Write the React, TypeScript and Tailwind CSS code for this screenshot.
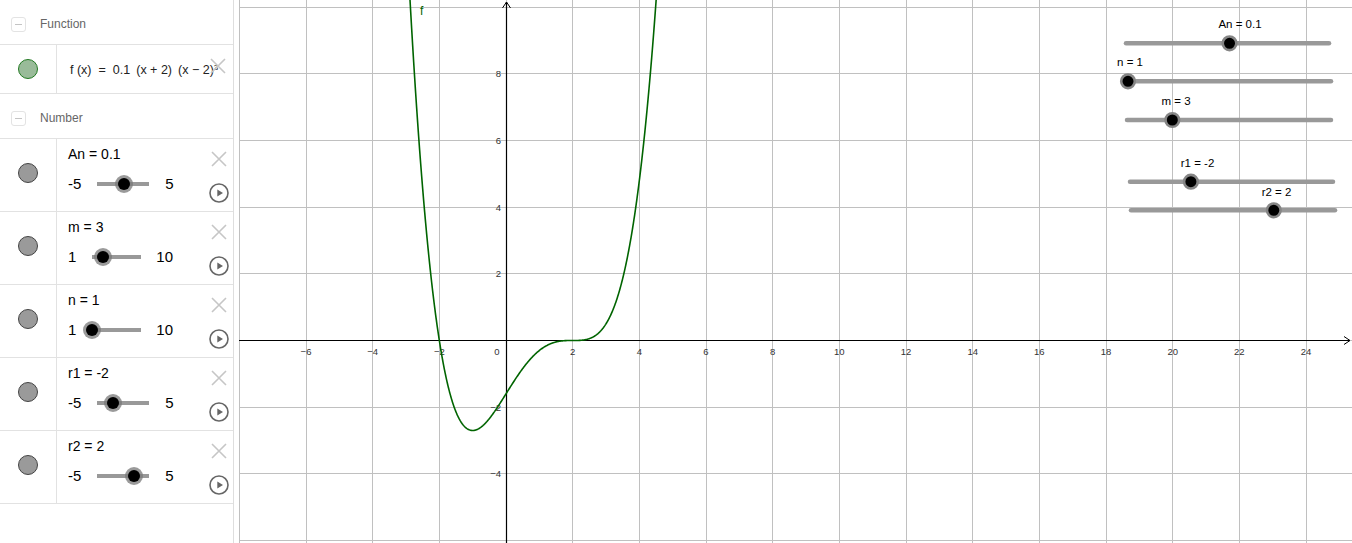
import React from "react";

type NumberItem = {
  name: string;
  value: number;
  min: number;
  max: number;
  track: number;
};

const numbers: NumberItem[] = [
  { name: "An", value: 0.1, min: -5, max: 5, track: 52 },
  { name: "m", value: 3, min: 1, max: 10, track: 49 },
  { name: "n", value: 1, min: 1, max: 10, track: 49 },
  { name: "r1", value: -2, min: -5, max: 5, track: 52 },
  { name: "r2", value: 2, min: -5, max: 5, track: 52 },
];

// sliders drawn on the graphics view (local svg coords)
const canvasSliders = [
  { label: "An = 0.1", x1: 887, x2: 1090, y: 43.3, frac: 0.51, lx: 1001, ly: 28 },
  { label: "n = 1", x1: 889, x2: 1092, y: 81.3, frac: 0, lx: 891, ly: 66 },
  { label: "m = 3", x1: 888, x2: 1092, y: 120, frac: 2 / 9, lx: 937, ly: 105 },
  { label: "r1 = -2", x1: 891, x2: 1094, y: 181.7, frac: 0.3, lx: 958.5, ly: 166.7 },
  { label: "r2 = 2", x1: 892, x2: 1096, y: 210.3, frac: 0.7, lx: 1037.5, ly: 195.7 },
];

const W = 1113;
const H = 543;
const OX = 267;
const OY = 340.5;
const S = 100 / 3;

const f = (x: number) => 0.1 * Math.pow(x + 2, 1) * Math.pow(x - 2, 3);

const fmt = (n: number) => (n < 0 ? `\u2212${Math.abs(n)}` : `${n}`);

const MinusButton = () => (
  <div className="ml-[11px] flex h-[15px] w-[15px] items-center justify-center rounded-[3px] border border-[#e3e3e3]">
    <div className="h-[1px] w-[7px] bg-[#c4c4c4]" />
  </div>
);

const CloseIcon = () => (
  <svg width="16" height="16" viewBox="0 0 16 16">
    <path d="M1 1 L15 15 M15 1 L1 15" stroke="#c6c6c6" strokeWidth="1.6" fill="none" />
  </svg>
);

const PlayIcon = () => (
  <svg width="20" height="20" viewBox="0 0 20 20">
    <circle cx="10" cy="10" r="9" stroke="#666" strokeWidth="1.6" fill="white" />
    <path d="M8.3 6.4 L8.3 13.6 L14 10 Z" fill="#666" />
  </svg>
);

const Knob = ({ size }: { size: number }) => (
  <div
    className="rounded-full bg-black"
    style={{ width: size, height: size, boxShadow: "0 0 0 3px rgba(120,120,120,0.75)" }}
  />
);

const NumberRow = ({ item }: { item: NumberItem }) => {
  const frac = (item.value - item.min) / (item.max - item.min);
  return (
    <div className="flex h-[73px] border-b border-[#e2e2e2]">
      <div className="flex w-[57px] shrink-0 justify-center border-r border-[#e2e2e2]">
        <div className="mt-[24px] h-[20px] w-[20px] rounded-full border border-[#444] bg-[#9a9a9a]" />
      </div>
      <div className="flex-1 pl-[11px] pt-[7px] text-black">
        <div className="text-[14px] leading-[16px]">
          {item.name} = {item.value}
        </div>
        <div className="mt-[12px] flex h-[20px] items-center gap-[16px] text-[15px] leading-[20px]">
          <span>{item.min}</span>
          <div className="relative h-[4px] bg-[#999]" style={{ width: item.track }}>
            <div
              className="absolute top-1/2 -translate-x-1/2 -translate-y-1/2"
              style={{ left: `${frac * 100}%` }}
            >
              <Knob size={12} />
            </div>
          </div>
          <span className={item.max === 10 ? "-ml-px" : ""}>{item.max}</span>
        </div>
      </div>
      <div className="flex w-[28px] shrink-0 flex-col items-center">
        <div className="mt-[12px]">
          <CloseIcon />
        </div>
        <div className="mt-[16px]">
          <PlayIcon />
        </div>
      </div>
    </div>
  );
};

const Graph = () => {
  const vLines: number[] = [];
  for (let k = -8; k <= 24; k += 2) vLines.push(Math.floor(OX + k * S) + 0.5);
  const hLines: number[] = [];
  for (let k = -6; k <= 10; k += 2) hLines.push(Math.floor(OY - k * S) + 0.5);

  const xLabels: number[] = [];
  for (let k = -6; k <= 24; k += 2) if (k !== 0) xLabels.push(k);
  const yLabels = [8, 6, 4, 2, -2, -4];

  const pts: string[] = [];
  for (let x = -3.1; x <= 4.75; x += 0.01) {
    const y = Math.max(-60, Math.min(H + 60, OY - f(x) * S));
    pts.push(`${(OX + x * S).toFixed(2)},${y.toFixed(2)}`);
  }

  return (
    <svg width={W} height={H} viewBox={`0 0 ${W} ${H}`} className="block shrink-0 bg-white">
      {vLines.map((x) => (
        <line key={`v${x}`} x1={x} y1={0} x2={x} y2={H} stroke="#c0c0c0" strokeWidth="1" />
      ))}
      {hLines.map((y) => (
        <line key={`h${y}`} x1={0} y1={y} x2={W} y2={y} stroke="#c0c0c0" strokeWidth="1" />
      ))}

      {/* axes */}
      <line x1={0} y1={OY} x2={W - 2} y2={OY} stroke="#000" strokeWidth="1.2" />
      <polyline points={`${W - 8},${OY - 4} ${W - 2},${OY} ${W - 8},${OY + 4}`} stroke="#000" fill="none" strokeWidth="1" />
      <line x1={OX + 0.5} y1={2} x2={OX + 0.5} y2={H} stroke="#000" strokeWidth="1.2" />
      <polyline points={`${OX - 3.5},${8} ${OX + 0.5},${2} ${OX + 4.5},${8}`} stroke="#000" fill="none" strokeWidth="1" />

      <g fontFamily="'Liberation Sans', Arial, sans-serif" fontSize="9.5" fill="#333">
        {xLabels.map((k) => (
          <text key={`xl${k}`} x={OX + k * S} y={OY + 14} textAnchor="middle">
            {fmt(k)}
          </text>
        ))}
        <text x={OX - 9} y={OY + 14} textAnchor="middle">
          0
        </text>
        {yLabels.map((k) => (
          <text key={`yl${k}`} x={OX - 5} y={OY - k * S + 3.5} textAnchor="end">
            {fmt(k)}
          </text>
        ))}
      </g>

      {/* function graph */}
      <polyline points={pts.join(" ")} stroke="#006400" strokeWidth="1.6" fill="none" />
      <text x={182.7} y={15} textAnchor="middle" fontSize="12" fill="#006400" fontFamily="'Liberation Sans', Arial, sans-serif">
        f
      </text>

      {/* sliders on the canvas */}
      {canvasSliders.map((s) => {
        const kx = s.x1 + s.frac * (s.x2 - s.x1);
        return (
          <g key={s.label}>
            <line x1={s.x1} y1={s.y} x2={s.x2} y2={s.y} stroke="#999" strokeWidth="4.5" strokeLinecap="round" />
            <circle cx={kx} cy={s.y} r={6.8} fill="#000" stroke="#858585" strokeWidth="2.6" />
            <text
              x={s.lx}
              y={s.ly}
              textAnchor="middle"
              fontSize="11.5"
              fill="#000"
              fontFamily="'Liberation Sans', Arial, sans-serif"
            >
              {s.label}
            </text>
          </g>
        );
      })}
    </svg>
  );
};

export default function App() {
  return (
    <div className="flex h-[543px] w-[1352px] overflow-hidden bg-white font-['Liberation_Sans',Arial,sans-serif]">
      {/* Algebra view */}
      <div className="flex w-[234px] shrink-0 flex-col border-r border-[#dedede]">
        <div className="flex h-[45px] items-center border-b border-[#e2e2e2] pt-[4px]">
          <MinusButton />
          <span className="ml-[14px] text-[12px] text-[#666]">Function</span>
        </div>

        <div className="relative flex h-[49px] border-b border-[#e2e2e2]">
          <div className="flex w-[57px] shrink-0 items-center justify-center border-r border-[#e2e2e2]">
            <div className="h-[20px] w-[20px] rounded-full border border-[#237a23] bg-[#99bb99]" />
          </div>
          <div className="flex flex-1 items-center overflow-hidden whitespace-nowrap pl-[13px] pt-[2px] text-[12.5px] text-[#222]">
            <span>f (x)</span>
            <span className="mx-[7px]">=</span>
            <span>0.1</span>
            <span className="ml-[6px]">(x + 2)</span>
            <span className="ml-[6px]">
              (x − 2)<sup className="text-[8px]">3</sup>
            </span>
          </div>
          <div className="absolute right-[7px] top-[13px]">
            <CloseIcon />
          </div>
        </div>

        <div className="flex h-[45px] items-center border-b border-[#e2e2e2] pt-[4px]">
          <MinusButton />
          <span className="ml-[14px] text-[12px] text-[#666]">Number</span>
        </div>

        {numbers.map((item) => (
          <NumberRow key={item.name} item={item} />
        ))}
      </div>

      <div className="w-[5px] shrink-0" />

      {/* Graphics view */}
      <Graph />
    </div>
  );
}
